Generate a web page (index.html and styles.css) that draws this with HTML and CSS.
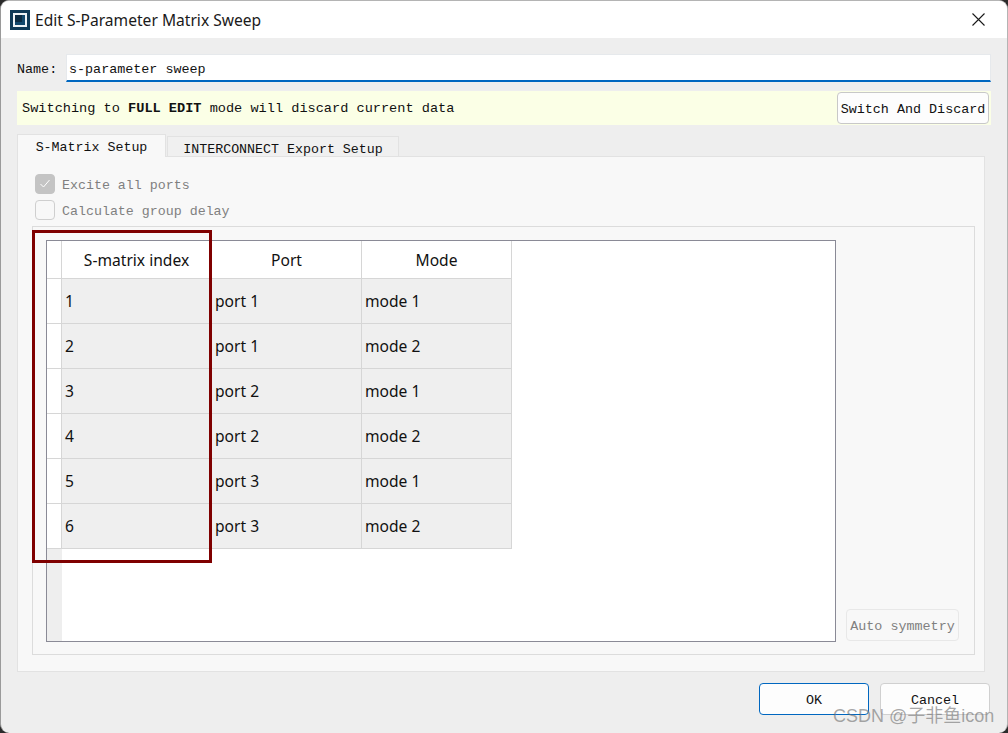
FILE: index.html
```html
<!DOCTYPE html>
<html lang="en">
<head>
<meta charset="utf-8">
<title>Edit S-Parameter Matrix Sweep</title>
<link rel="stylesheet" href="styles.css">
</head>
<body>
<div class="window">
  <header class="titlebar">
    <svg class="app-icon" width="20" height="20" viewBox="0 0 20 20"><rect width="20" height="20" fill="#0f3a57"/><rect x="4" y="4" width="12" height="12" fill="#12486c" stroke="#eef3f6" stroke-width="2"/><rect x="5" y="5" width="7" height="7" fill="#0b2b42"/></svg>
    <span class="title">Edit S-Parameter Matrix Sweep</span>
    <svg class="close" width="13" height="13" viewBox="0 0 13 13"><path d="M.5.5l12 12M12.500.5l-12 12" stroke="#1a1a1a" stroke-width="1.1" fill="none"/></svg>
  </header>
  <main class="content">
    <div class="name-row">
      <label class="mono">Name:</label>
      <div class="name-input mono">s-parameter sweep</div>
    </div>
    <div class="notice mono">
      <span>Switching to <b>FULL EDIT</b> mode will discard current data</span>
      <button class="btn switch mono">Switch And Discard</button>
    </div>
    <div class="tabs mono">
      <div class="tab active">S-Matrix Setup</div>
      <div class="tab">INTERCONNECT Export Setup</div>
    </div>
    <section class="pane">
      <div class="check-row mono"><span class="check on"><svg width="12" height="10" viewBox="0 0 12 10"><path d="M1.500 5l3 3 6-7" stroke="#fff" stroke-width="1" fill="none"/></svg></span><span class="lbl">Excite all ports</span></div>
      <div class="check-row second mono"><span class="check"></span><span class="lbl">Calculate group delay</span></div>
      <div class="group">
        <div class="table">
          <div class="grid">
            <div class="corner"></div><div class="hd">S-matrix index</div><div class="hd">Port</div><div class="hd">Mode</div>
            <div class="rh"></div><div class="td">1</div><div class="td">port 1</div><div class="td">mode 1</div>
            <div class="rh"></div><div class="td">2</div><div class="td">port 1</div><div class="td">mode 2</div>
            <div class="rh"></div><div class="td">3</div><div class="td">port 2</div><div class="td">mode 1</div>
            <div class="rh"></div><div class="td">4</div><div class="td">port 2</div><div class="td">mode 2</div>
            <div class="rh"></div><div class="td">5</div><div class="td">port 3</div><div class="td">mode 1</div>
            <div class="rh"></div><div class="td">6</div><div class="td">port 3</div><div class="td">mode 2</div>
          </div>
          <div class="table-rest"><div class="rest-gutter"></div></div>
        </div>
        <div class="side"><button class="btn auto mono">Auto symmetry</button></div>
      </div>
    </section>
    <footer class="actions mono">
      <button class="btn ok mono">OK</button>
      <button class="btn cancel mono">Cancel</button>
    </footer>
  </main>
  <div class="highlight"></div>
  <div class="watermark">CSDN @子非鱼icon</div>
</div>
</body>
</html>
```
FILE: styles.css
```css
* { box-sizing: border-box; }
html, body { margin: 0; height: 100%; overflow: hidden; background: #2b2b2b; }
.mono { font-family: "Liberation Mono", "DejaVu Sans Mono", monospace; font-size: 13.4px; color: #111; }
.window {
  position: relative; width: 1008px; height: 733px; display: flex; flex-direction: column;
  background: #eee; border: 1px solid #b4b4b4; border-left-color: #9a9a9a; border-bottom: 0; border-radius: 9px; overflow: hidden;
}
.titlebar { height: 37px; flex: none; background: #fff; display: flex; align-items: center; padding: 0 22px 0 9px; }
.app-icon { margin-right: 5px; }
.title { flex: 1; font: 15.6px "Noto Sans", "Open Sans", sans-serif; color: #1a1a1a; }
.content { flex: 1; display: flex; flex-direction: column; padding: 16px 16px 0 16px; }
.name-row { display: flex; align-items: center; height: 28px; }
.name-row label { width: 49px; position: relative; top: 1px; }
.name-input { flex: 1; height: 28px; background: #fff; border: 1px solid #e6e9ec; border-bottom: 2px solid #0067c0; padding: 4px 0 0 2px; line-height: 22px; }
.notice { margin-top: 9px; height: 34px; background: #fbffe6; display: flex; align-items: center; justify-content: space-between; padding: 0 1px 0 5px; font-size: 13.6px; }
.btn { background: #fdfdfd; border: 1px solid #d0d0d0; border-radius: 4px; padding: 2px 0 0; cursor: default; }
.switch { width: 152px; height: 32px; border-color: #c8c8c8; margin-right: 1px; font-size: 13.4px; }
.tabs { margin-top: 9px; display: flex; align-items: flex-end; height: 22px; }
.tab { height: 20px; width: 232px; margin-left: 1px; background: #f0f0f0; border: 1px solid #e2e2e2; border-bottom: 0; text-align: center; line-height: 25px; font-size: 13.3px; }
.tab.active { height: 23px; width: 149px; margin-left: 0; background: #f8f8f8; line-height: 25px; position: relative; top: 1px; z-index: 1; }
.pane { width: 968px; height: 516px; background: #f8f8f8; border: 1px solid #e2e2e2; padding: 17px 10px 16px 14px; display: flex; flex-direction: column; }
.check-row { display: flex; align-items: center; gap: 7px; height: 20px; margin-left: 3px; color: #808080; font-size: 13.3px; }
.lbl { padding-top: 2px; }
.check-row.second { margin-top: 6px; }
.check { width: 20px; height: 20px; border-radius: 4px; border: 1px solid #cfcfcf; display: flex; align-items: center; justify-content: center; }
.check.on { background: #c4c4c4; border-color: #c4c4c4; }
.group { margin-top: 6px; width: 943px; height: 429px; border: 1px solid #dcdcdc; padding: 13px 10px 13px 13px; display: flex; position: relative; }
.table { width: 790px; height: 402px; border: 1px solid #8a8a96; background: #fff; display: flex; flex-direction: column; }
.grid { display: grid; grid-template-columns: 15px 150px 150px 150px; grid-template-rows: 38px repeat(6, 45px); font-family: "Noto Sans", "Open Sans", sans-serif; font-size: 15.6px; color: #111; justify-content: start; }
.corner, .rh { background: #fff; border-right: 1px solid #d6d6d6; border-bottom: 1px solid #d6d6d6; }
.hd { background: #fff; border-right: 1px solid #d6d6d6; border-bottom: 1px solid #d6d6d6; text-align: center; line-height: 38px; }
.td { background: #efefef; border-right: 1px solid #d6d6d6; border-bottom: 1px solid #d6d6d6; padding-left: 3px; line-height: 44px; }
.table-rest { flex: 1; display: flex; }
.rest-gutter { width: 15px; background: #eee; }
.side { flex: 1; display: flex; align-items: flex-end; justify-content: flex-end; }
.auto { width: 113px; height: 32px; color: #808080; background: #f8f8f8; border-color: #e8e8e8; margin-right: 5px; padding-top: 3px; }
.actions { display: flex; justify-content: flex-end; gap: 11px; margin-top: 11px; margin-right: 1px; }
.ok, .cancel { width: 110px; height: 32px; }
.ok { border-color: #0067c0; }
.highlight { position: absolute; left: 31px; top: 229px; width: 180px; height: 333px; border: 3px solid #7f0000; pointer-events: none; }
.watermark { position: absolute; left: 832px; top: 700px; font: 18px "Liberation Sans", "Noto Sans CJK SC", sans-serif; color: rgba(110, 110, 110, .6); white-space: nowrap; }
```
